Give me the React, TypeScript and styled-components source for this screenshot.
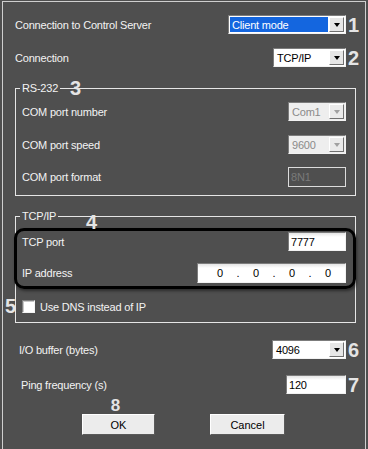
import React from 'react';
import styled, { createGlobalStyle, css } from 'styled-components';

const GlobalStyle = createGlobalStyle`
  html, body {
    margin: 0;
    padding: 0;
    background: #4f4f4f;
    overflow: hidden;
  }
  body {
    font-family: "Liberation Sans", Arial, sans-serif;
  }
`;

const markerText = css`
  font-family: "Liberation Sans", Arial, sans-serif;
  font-size: 20px;
  line-height: 20px;
  font-weight: bold;
  color: #e4e4e4;
`;

const Window = styled.div`
  box-sizing: border-box;
  width: 364px;
  height: 448px;
  margin: 1px 0 0 2px;
  border: 1px solid #cfcfcf;
  border-bottom: none;
  padding-left: 12px;
  background: #4f4f4f;
  display: flex;
  flex-direction: column;
`;

const Row = styled.div<{ $top: number; $h?: number }>`
  position: relative;
  display: flex;
  align-items: center;
  margin-top: ${p => p.$top}px;
  height: ${p => p.$h ?? 19}px;
`;

const Label = styled.span<{ $indent?: number }>`
  flex: 1;
  padding-left: ${p => p.$indent ?? 0}px;
  color: #f3f3f3;
  font-size: 11px;
  letter-spacing: -0.2px;
  white-space: nowrap;
`;

const Marker = styled.span`
  ${markerText};
  width: 19px;
  padding-left: 2px;
  box-sizing: border-box;
`;

const SideMarker = styled.span`
  ${markerText};
  position: absolute;
  left: -17px;
  top: -4px;
`;

const Group = styled.fieldset<{ $top: number; $bottom: number }>`
  margin: ${p => p.$top}px 9px 0 0;
  padding: 0 9px ${p => p.$bottom}px 6px;
  border: 1px solid #e6e6e6;
  min-width: 0;
`;

const Legend = styled.legend`
  position: relative;
  margin-left: -2px;
  padding: 0 2px;
  font-size: 11px;
  line-height: 14px;
  letter-spacing: -0.2px;
  color: #f3f3f3;
`;

const LegendMarker = styled.span<{ $left: number; $top: number }>`
  ${markerText};
  position: absolute;
  left: ${p => p.$left}px;
  top: ${p => p.$top}px;
  letter-spacing: 0;
`;

const Highlight = styled.div`
  margin: 5px -10px 0 -8px;
  padding: 1px 7px 3px 5px;
  border: 3px solid #000;
  border-radius: 10px;
  box-shadow: 1px 2px 3px rgba(0, 0, 0, 0.45);
`;

const ComboBox = styled.div<{ $w: number; $disabled?: boolean }>`
  box-sizing: border-box;
  width: ${p => p.$w}px;
  height: 19px;
  display: flex;
  padding: 1px;
  background: ${p => (p.$disabled ? '#eeeeee' : '#ffffff')};
  border: 1px solid;
  border-color: #7c7c7c #f2f2f2 #f2f2f2 #7c7c7c;
`;

const ComboValue = styled.div<{ $selected?: boolean; $disabled?: boolean }>`
  flex: 1;
  display: flex;
  align-items: center;
  padding-left: 2px;
  margin-right: 1px;
  font-size: 11px;
  letter-spacing: -0.2px;
  background: ${p => (p.$selected ? '#1466df' : 'transparent')};
  color: ${p => (p.$selected ? '#ffffff' : p.$disabled ? '#8a8a8a' : '#000000')};
`;

const DropButton = styled.div<{ $disabled?: boolean }>`
  box-sizing: border-box;
  width: 15px;
  display: flex;
  align-items: center;
  justify-content: center;
  background: ${p => (p.$disabled ? '#eaeaea' : '#e6e6e6')};
  border: 1px solid;
  border-color: #ffffff #707070 #707070 #ffffff;

  &::after {
    content: '';
    border-left: 3.5px solid transparent;
    border-right: 3.5px solid transparent;
    border-top: 4px solid ${p => (p.$disabled ? '#a0a0a0' : '#000000')};
  }
`;

const Edit = styled.div<{ $w: number; $h?: number; $disabled?: boolean }>`
  box-sizing: border-box;
  width: ${p => p.$w}px;
  height: ${p => p.$h ?? 19}px;
  display: flex;
  align-items: center;
  padding-left: 2px;
  font-size: 11px;
  letter-spacing: -0.2px;
  color: ${p => (p.$disabled ? '#7a7a7a' : '#000000')};
  background: ${p => (p.$disabled ? 'transparent' : 'linear-gradient(#e4e4e4, #ffffff 4px)')};
  border: 1px solid;
  border-color: ${p => (p.$disabled ? '#dcdcdc' : '#7c7c7c #f2f2f2 #f2f2f2 #7c7c7c')};
`;

const IpEdit = styled(Edit)`
  padding-left: 6px;
`;

const Octet = styled.span`
  width: 32px;
  text-align: center;
`;

const Dot = styled.span`
  width: 4px;
  text-align: center;
`;

const CheckBox = styled.span`
  box-sizing: border-box;
  width: 13px;
  height: 13px;
  margin-right: 5px;
  background: #ffffff;
  border: 1px solid;
  border-color: #808080 #f4f4f4 #f4f4f4 #808080;
  box-shadow: inset 1px 1px 0 #c8c8c8;
`;

const ButtonBar = styled.div`
  display: flex;
  align-items: flex-end;
  margin-top: 3px;
  padding-left: 67px;
  gap: 55px;
`;

const ButtonStack = styled.div`
  display: flex;
  flex-direction: column;
  align-items: center;
`;

const StackMarker = styled.span`
  ${markerText};
  font-size: 17px;
  line-height: 17px;
  margin-right: 6px;
`;

const Button = styled.button<{ $w: number }>`
  box-sizing: border-box;
  width: ${p => p.$w}px;
  height: 21px;
  padding: 0;
  font-family: "Liberation Sans", Arial, sans-serif;
  font-size: 11px;
  color: #000;
  background: #ececec;
  border: 1px solid;
  border-color: #ffffff #5a5a5a #5a5a5a #ffffff;
`;

type ComboProps = {
  value: string
  width: number
  selected?: boolean
  disabled?: boolean
}

const Combo = (props: ComboProps) => (
  <ComboBox $w={props.width} $disabled={props.disabled}>
    <ComboValue $selected={props.selected} $disabled={props.disabled}>{props.value}</ComboValue>
    <DropButton $disabled={props.disabled} />
  </ComboBox>
);

export default function App() {
  return (
    <>
      <GlobalStyle />
      <Window>
        <Row $top={13}>
          <Label>Connection to Control Server</Label>
          <Combo value="Client mode" width={118} selected />
          <Marker>1</Marker>
        </Row>
        <Row $top={14}>
          <Label>Connection</Label>
          <Combo value="TCP/IP" width={73} />
          <Marker>2</Marker>
        </Row>

        <Group $top={14} $bottom={8}>
          <Legend>
            RS-232
            <LegendMarker $left={50} $top={-3}>3</LegendMarker>
          </Legend>
          <Row $top={7}>
            <Label>COM port number</Label>
            <Combo value="Com1" width={58} disabled />
          </Row>
          <Row $top={14}>
            <Label>COM port speed</Label>
            <Combo value="9600" width={58} disabled />
          </Row>
          <Row $top={13} $h={20}>
            <Label>COM port format</Label>
            <Edit $w={58} $h={20} $disabled>8N1</Edit>
          </Row>
        </Group>

        <Group $top={13} $bottom={9}>
          <Legend>
            TCP/IP
            <LegendMarker $left={66} $top={3}>4</LegendMarker>
          </Legend>
          <Highlight>
            <Row $top={0}>
              <Label>TCP port</Label>
              <Edit $w={58}>7777</Edit>
            </Row>
            <Row $top={12} $h={20}>
              <Label>IP address</Label>
              <IpEdit $w={149} $h={20}>
                <Octet>0</Octet><Dot>.</Dot>
                <Octet>0</Octet><Dot>.</Dot>
                <Octet>0</Octet><Dot>.</Dot>
                <Octet>0</Octet>
              </IpEdit>
            </Row>
          </Highlight>
          <Row $top={11} $h={13}>
            <SideMarker>5</SideMarker>
            <CheckBox />
            <Label>Use DNS instead of IP</Label>
          </Row>
        </Group>

        <Row $top={17}>
          <Label $indent={4}>I/O buffer (bytes)</Label>
          <Combo value="4096" width={74} />
          <Marker>6</Marker>
        </Row>
        <Row $top={16}>
          <Label $indent={6}>Ping frequency (s)</Label>
          <Edit $w={60}>120</Edit>
          <Marker>7</Marker>
        </Row>

        <ButtonBar>
          <ButtonStack>
            <StackMarker>8</StackMarker>
            <Button $w={73}>OK</Button>
          </ButtonStack>
          <Button $w={75}>Cancel</Button>
        </ButtonBar>
      </Window>
    </>
  );
}
